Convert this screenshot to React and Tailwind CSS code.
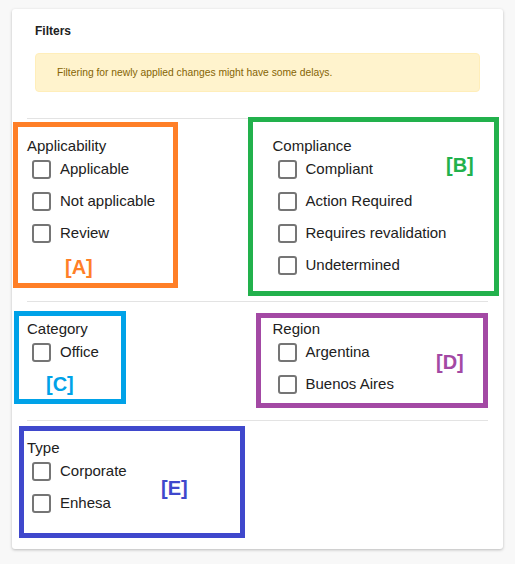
import React from "react";

function Check({ label }) {
  return (
    <div className="flex h-[32px] items-center pl-[5px]">
      <span className="box-border h-[19px] w-[19px] rounded-[3px] border-2 border-[#757575] bg-white" />
      <span className="ml-[9px] text-[15px] leading-[16px] text-[#212121]">{label}</span>
    </div>
  );
}

function Group({ title, items }) {
  return (
    <div className="px-[15px]">
      <div className="text-[15px] leading-[14px] text-[#212121]">{title}</div>
      {items.map((i) => (
        <Check key={i} label={i} />
      ))}
    </div>
  );
}

function Box({ cls, labelCls, label }) {
  return (
    <>
      <div className={"pointer-events-none absolute box-border border-[5px] " + cls} />
      <div className={"absolute text-[20px] font-bold leading-none " + labelCls}>{label}</div>
    </>
  );
}

export default function App() {
  return (
    <div
      className="relative h-[564px] w-[515px] bg-[#f8f8f8] pl-[12px] pt-[9px]"
      style={{ fontFamily: '"Liberation Sans", Arial, sans-serif' }}
    >
      <div className="w-[491px] rounded-[3px] bg-white pb-[30px] shadow-[0_1px_3px_rgba(0,0,0,0.25)]">
        <div className="px-[23px] pt-[15px] text-[12px] font-bold leading-[14px] text-[#212121]">Filters</div>
        <div className="mx-[23px] mt-[15px] flex h-[39px] items-center rounded-[4px] border border-[#ffeeba] bg-[#fff3cd] px-[21px] text-[10.3px] text-[#856404]">
          Filtering for newly applied changes might have some delays.
        </div>
        <div className="mx-[15px] mt-[26px] border-t border-[#e3e3e3]" />
        <div className="grid grid-cols-2 pb-[20px] pt-[20px]">
          <Group title="Applicability" items={["Applicable", "Not applicable", "Review"]} />
          <Group
            title="Compliance"
            items={["Compliant", "Action Required", "Requires revalidation", "Undetermined"]}
          />
        </div>
        <div className="mx-[15px] border-t border-[#e3e3e3]" />
        <div className="grid grid-cols-2 pb-[20px] pt-[20px]">
          <Group title="Category" items={["Office"]} />
          <Group title="Region" items={["Argentina", "Buenos Aires"]} />
        </div>
        <div className="mx-[15px] border-t border-[#e3e3e3]" />
        <div className="grid grid-cols-2 pt-[20px]">
          <Group title="Type" items={["Corporate", "Enhesa"]} />
        </div>
      </div>

      <Box
        cls="left-[13px] top-[122px] h-[166px] w-[165px] border-[#ff7f27]"
        labelCls="left-[65px] top-[257px] text-[#ff7f27]"
        label="[A]"
      />
      <Box
        cls="left-[248px] top-[117px] h-[179px] w-[251px] border-[#22b14c]"
        labelCls="left-[446px] top-[155px] text-[#22b14c]"
        label="[B]"
      />
      <Box
        cls="left-[14px] top-[311px] h-[93px] w-[112px] border-[#00a2e8]"
        labelCls="left-[46px] top-[374px] text-[#00a2e8]"
        label="[C]"
      />
      <Box
        cls="left-[256px] top-[313px] h-[95px] w-[232px] border-[#a349a4]"
        labelCls="left-[436px] top-[352px] text-[#a349a4]"
        label="[D]"
      />
      <Box
        cls="left-[19px] top-[426px] h-[112px] w-[226px] border-[#3f48cc]"
        labelCls="left-[161px] top-[478px] text-[#3f48cc]"
        label="[E]"
      />
    </div>
  );
}
